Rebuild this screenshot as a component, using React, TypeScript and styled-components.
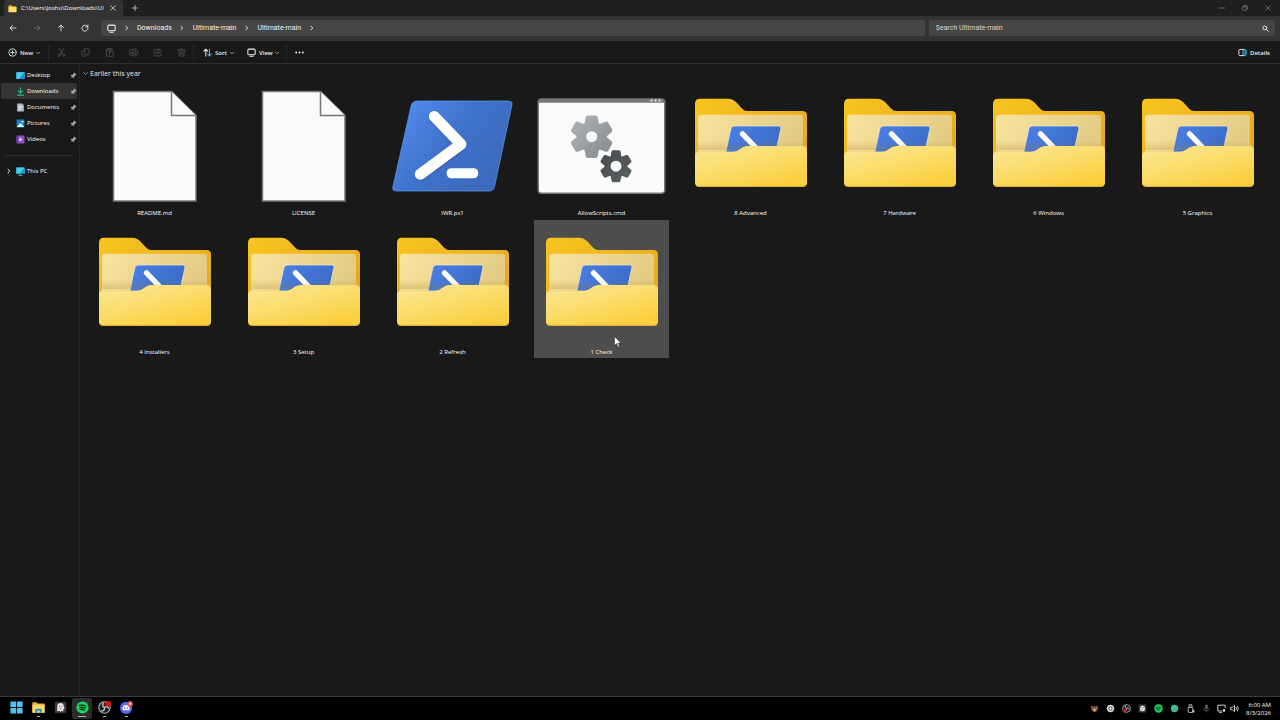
import React, { useId } from "react";
import styled, { createGlobalStyle } from "styled-components";

const GlobalStyle = createGlobalStyle`
  *, *::before, *::after { box-sizing: border-box; }
  body {
    margin: 0;
    background: #191919;
    color: #e4e4e4;
    font-family: "Open Sans", "Noto Sans", sans-serif;
    font-size: 7px;
    line-height: 10px;
  }
  button, input { font: inherit; color: inherit; }
  button { border: 0; padding: 0; background: none; cursor: default; }
  a { color: inherit; text-decoration: none; cursor: default; }
  ul, ol { margin: 0; padding: 0; list-style: none; }
  svg { display: block; flex: none; }
`;

/* ---------- Window frame ---------- */

const Desktop = styled.div`
  display: flex;
  flex-direction: column;
  min-height: 100vh;
`;

const TitleBar = styled.header`
  display: flex;
  align-items: stretch;
  height: 16px;
  padding-left: 4px;
  background: #1f1f1f;
`;

const Tab = styled.div`
  display: flex;
  align-items: center;
  gap: 4px;
  width: 119px;
  padding: 0 6px 0 4px;
  border-radius: 4px 4px 0 0;
  background: #333333;
`;

const TabTitle = styled.span`
  flex: 1;
  white-space: nowrap;
  font-size: 6px;
  color: #ffffff;
`;

const GlyphButton = styled.button<{ $width?: number; $dim?: boolean }>`
  display: flex;
  align-items: center;
  justify-content: center;
  width: ${(p) => p.$width ?? 24}px;
  color: ${(p) => (p.$dim ? "#7c7c7c" : "#dedede")};
`;

const WindowButtons = styled.div`
  display: flex;
  margin-left: auto;
  padding-right: 1px;
  color: #a0a0a0;
`;

const AddressRow = styled.div`
  display: flex;
  align-items: stretch;
  height: 25px;
  padding: 4px 5px 5px 1px;
  background: #333333;
  font-family: Roboto, "Open Sans", sans-serif;
`;

const NavButtons = styled.div`
  display: flex;
  width: 100px;
`;

const Breadcrumbs = styled.nav`
  display: flex;
  flex: 27 1 0;
  align-items: center;
  padding-left: 6px;
  border-radius: 2px;
  background: #454545;
  color: #f0f0f0;
`;

const CrumbList = styled.ol`
  display: flex;
  align-items: center;
`;

const Crumb = styled.li`
  display: flex;
  align-items: center;
`;

const CrumbChevron = styled.span`
  display: flex;
  justify-content: center;
  width: 21px;
`;

const SearchBox = styled.label`
  display: flex;
  flex: 11 1 0;
  align-items: center;
  margin-left: 4px;
  padding: 0 6px 0 7px;
  border-radius: 2px;
  background: #454545;
`;

const SearchInput = styled.input`
  flex: 1;
  min-width: 0;
  height: 12px;
  padding: 0;
  border: 0;
  outline: 0;
  background: none;
  &::placeholder { color: #d8d8d8; opacity: 1; }
`;

const Toolbar = styled.div`
  display: flex;
  align-items: stretch;
  height: 23px;
  padding: 1px 10px 0 8px;
  border-bottom: 1px solid #303030;
  background: #191919;
  font-size: 6px;
  font-weight: 600;
`;

const ToolButton = styled.button<{ $width?: number }>`
  display: flex;
  align-items: center;
  gap: 3px;
  width: ${(p) => (p.$width ? `${p.$width}px` : "auto")};
  color: #eeeeee;
  white-space: nowrap;
`;

const ToolLabel = styled.span<{ $width: number }>`
  width: ${(p) => p.$width}px;
`;

const ToolSeparator = styled.span<{ $after: number }>`
  width: 1px;
  margin: 2px ${(p) => p.$after}px 2px 0;
  background: #262626;
`;

const DetailsButton = styled(ToolButton)`
  margin-left: auto;
`;

/* ---------- Body ---------- */

const Body = styled.div`
  display: flex;
  flex: 1;
`;

const Sidebar = styled.nav`
  width: 80px;
  padding: 3px 2px 0 1px;
  border-right: 1px solid #262626;
`;

const SideLink = styled.a<{ $active?: boolean }>`
  display: flex;
  align-items: center;
  height: 16px;
  border-radius: 2px;
  background: ${(p) => (p.$active ? "#343434" : "transparent")};
  font-size: 6px;
  color: #ffffff;
`;

const SideChevron = styled.span`
  display: flex;
  justify-content: center;
  width: 15px;
`;

const SideLabel = styled.span`
  flex: 1;
  margin-left: 2px;
`;

const SideDivider = styled.hr`
  height: 1px;
  margin: 8px 4px 7px 4px;
  border: 0;
  background: #303030;
`;

const Content = styled.main`
  flex: 1;
  min-width: 0;
`;

const GroupHeading = styled.h2`
  display: flex;
  align-items: center;
  gap: 2px;
  height: 17px;
  margin: 0;
  padding: 2px 0 0 3px;
  font-size: 7px;
  font-weight: 400;
  color: #e8e8e8;
`;

const TileGrid = styled.ul`
  display: grid;
  grid-template-columns: repeat(auto-fill, 135px);
  gap: 1px 14px;
  padding: 0 7px;
`;

const TileCell = styled.li`
  position: relative;
`;

const Tile = styled.button<{ $hovered?: boolean }>`
  display: flex;
  flex-direction: column;
  align-items: center;
  width: 100%;
  height: 138px;
  padding-top: 1px;
  background: ${(p) => (p.$hovered ? "#4d4d4d" : "transparent")};
`;

const TileLabel = styled.span`
  font-size: 6px;
  line-height: 8px;
  color: #ffffff;
`;

const Cursor = styled.svg`
  position: absolute;
  left: 80px;
  top: 116px;
`;

/* ---------- Taskbar ---------- */

const Taskbar = styled.footer`
  display: flex;
  align-items: stretch;
  height: 24px;
  padding: 0 9px 0 5px;
  border-top: 1px solid #3a3a3a;
  background: #000000;
`;

const TaskButton = styled.button<{ $active?: boolean }>`
  display: flex;
  flex-direction: column;
  align-items: center;
  width: 20px;
  margin: 1px 1px;
  padding-top: 3px;
  border-radius: 2px;
  background: ${(p) => (p.$active ? "#2c2c2c" : "transparent")};
`;

const RunningMark = styled.span<{ $wide?: boolean }>`
  width: ${(p) => (p.$wide ? 8 : 3)}px;
  height: 1px;
  margin-top: 2px;
  background: #b0b0b0;
`;

const Tray = styled.div`
  display: flex;
  align-items: center;
  margin-left: auto;
`;

const Clock = styled.time`
  width: 31px;
  font-size: 6px;
  line-height: 8px;
  text-align: right;
  white-space: nowrap;
  color: #ffffff;
`;

/* ---------- Small glyphs ---------- */

type GlyphProps = {
  size?: number;
  color?: string;
  weight?: number;
  children: React.ReactNode;
};

const Glyph = ({ size = 8, color = "currentColor", weight = 1.6, children }: GlyphProps) => (
  <svg
    width={size}
    height={size}
    viewBox="0 0 16 16"
    fill="none"
    stroke={color}
    strokeWidth={weight}
    strokeLinecap="round"
    strokeLinejoin="round"
    aria-hidden="true"
  >
    {children}
  </svg>
);

const ChevronRight = ({ size = 6 }: { size?: number }) => (
  <Glyph size={size} weight={2.4}><path d="M5 3l5 5-5 5" /></Glyph>
);
const ChevronDown = ({ size = 4, weight = 2.4 }: { size?: number; weight?: number }) => (
  <Glyph size={size} weight={weight}><path d="M2 5l6 6 6-6" /></Glyph>
);
const CloseGlyph = ({ size = 6 }: { size?: number }) => (
  <Glyph size={size} weight={2}><path d="M2 2l12 12M14 2L2 14" /></Glyph>
);
const MonitorGlyph = () => (
  <Glyph size={9} weight={1.8}><rect x="1.5" y="2" width="13" height="10" rx="2" /><path d="M5 14.5h6" /></Glyph>
);
const PinGlyph = () => (
  <svg width="7" height="7" viewBox="0 0 16 16" fill="#a5a5a5" aria-hidden="true">
    <path d="M10 1l5 5-1.500 1.300-1 0L9.800 10l-.3 3L8 14.300 4.900 11.200 2 14.300l-.8.2.2-.8L4.500 10.800 1.700 8 3 6.500l3-.3L8.700 3.500V2.300z" />
  </svg>
);

const toolIcons: { name: string; art: React.ReactNode }[] = [
  { name: "Cut", art: <><path d="M4 1l6.500 10M12 1L5.500 11" /><circle cx="4" cy="13" r="2" /><circle cx="12" cy="13" r="2" /></> },
  { name: "Copy", art: <><rect x="6" y="1.500" width="8.500" height="10" rx="1.500" /><path d="M4 4.500H3A1.500 1.500 0 001.500 6v7A1.500 1.500 0 003 14.500h6A1.500 1.500 0 0010.500 13" /></> },
  { name: "Paste", art: <><path d="M5 2.500H2.500v12H6M11 2.500h2.500V5" /><path d="M5 1h6v3H5z" /><rect x="8" y="6.500" width="6.500" height="8.500" rx="1" /></> },
  { name: "Rename", art: <><path d="M9 3H3a2 2 0 00-2 2v6a2 2 0 002 2h6M13 3a2 2 0 012 2v6a2 2 0 01-2 2M11 1v14" /><path d="M3.500 10.500L6 5l2.500 5.500M4.500 9h3" /></> },
  { name: "Share", art: <><path d="M7 3H3.500A1.500 1.500 0 002 4.500v8A1.500 1.500 0 003.500 14h9a1.500 1.500 0 001.500-1.500V10" /><path d="M10.500 1.500L15 5.500l-4.500 4V7C8 7 6.500 8 5.500 10c0-3.500 2-6 5-6z" /></> },
  { name: "Delete", art: <><path d="M1.500 3.500h13M3 3.500l1 11h8l1-11M6 3.500a2 2 0 014 0M6.500 6.500v5M9.500 6.500v5" /></> },
];

const MutedGlyph = styled.span`
  display: flex;
  color: #4c5355;
`;

const SmallFolder = ({ size }: { size: number }) => (
  <svg width={size} height={size} viewBox="0 0 16 16" aria-hidden="true">
    <path d="M1 3a1 1 0 011-1h4l2 2h6a1 1 0 011 1v9H1z" fill="#e0a526" />
    <path d="M1 5.500h14v8a1 1 0 01-1 1H2a1 1 0 01-1-1z" fill="#ffdc68" />
  </svg>
);

/* ---------- Sidebar icons ---------- */

const sideIcons: Record<string, React.ReactNode> = {
  Desktop: <><rect x="0" y="2" width="16" height="12" rx="1.500" fill="#1695cc" /><path d="M1 2h14L5 14H1z" fill="#46cdf0" /></>,
  Downloads: <><path d="M8 1v9M3.500 6.500L8 11l4.500-4.500" stroke="#25b884" strokeWidth="2.200" fill="none" /><path d="M2 14.500h12" stroke="#25b884" strokeWidth="2.200" /></>,
  Documents: <><path d="M2 1h9l3 3v11H2z" fill="#a9b7ca" /><path d="M4.500 6H11M4.500 9H11M4.500 12H9" stroke="#edf3fa" strokeWidth="1.500" /></>,
  Pictures: <><rect x="1" y="1" width="14" height="14" rx="1.500" fill="#1680c4" /><path d="M1.500 14L8 6.500 14.500 14z" fill="#e5f5ff" /><circle cx="11.500" cy="4.500" r="1.500" fill="#ffffff" /></>,
  Videos: <><rect x="1" y="1" width="14" height="14" rx="1.500" fill="#8e4fd0" /><path d="M1 2h3v12H1z" fill="#6d35b0" /><path d="M6 5l5.500 3L6 11z" fill="#ffffff" /></>,
  "This PC": <><rect x="0" y="1" width="16" height="11" rx="1.500" fill="#1b9fca" /><path d="M1 1h14L6 12H1z" fill="#45d0e4" /><path d="M7 12h2v2h3v1.500H4V14h3z" fill="#7d9dad" /></>,
};

const SideIcon = ({ name }: { name: string }) => (
  <svg width="9" height="9" viewBox="0 0 16 16" aria-hidden="true">{sideIcons[name]}</svg>
);

/* ---------- Large file icons ---------- */

const Artwork = ({ children }: { children: React.ReactNode }) => (
  <svg width="129" height="127" viewBox="0 0 129 127" aria-hidden="true">{children}</svg>
);

const DocumentArt = () => (
  <Artwork>
    <path d="M23.500 9.500H81.500L106 33.500V119H23.500z" fill="#fafafa" stroke="#767676" strokeWidth="1.500" />
    <path d="M81.500 9.500V33.500H106" fill="#fafafa" stroke="#767676" strokeWidth="1.500" strokeLinejoin="round" />
  </Artwork>
);

const PowerShellArt = () => {
  const id = useId();
  return (
    <Artwork>
      <defs>
        <linearGradient id={id} x1="0" y1="0.2" x2="1" y2="0.8">
          <stop offset="0" stopColor="#5089ee" />
          <stop offset="0.45" stopColor="#4072cb" />
          <stop offset="1" stopColor="#3b68b9" />
        </linearGradient>
      </defs>
      <path
        d="M29.500 19H120.500Q124.800 19 123.900 23L106.500 104.500Q105.500 109 101 109H8.500Q4 109 4.900 105L23.200 23.500Q24.300 19 29.500 19z"
        fill={`url(#${id})`}
        stroke="#5b93e6"
        strokeWidth="0.8"
      />
      <path d="M46.500 36L73.500 63.500L32.500 93.500" fill="none" stroke="#2c529c" strokeOpacity="0.5" strokeWidth="11.500" strokeLinecap="round" strokeLinejoin="round" />
      <path d="M46.300 34.500L73 62.300L32.300 92.300" fill="none" stroke="#ffffff" strokeWidth="11" strokeLinecap="round" strokeLinejoin="round" />
      <rect x="58.700" y="86.300" width="31.500" height="10" rx="4.500" fill="#ffffff" />
    </Artwork>
  );
};

const GearShape = ({ cx, cy, scale, fill }: { cx: number; cy: number; scale: number; fill: string }) => {
  const id = useId();
  return (
    <g transform={`translate(${cx} ${cy}) scale(${scale})`}>
      <mask id={id} maskUnits="userSpaceOnUse" x="-24" y="-24" width="48" height="48">
        <rect x="-24" y="-24" width="48" height="48" fill="#ffffff" />
        <circle r={5.5 / scale} fill="#000000" />
      </mask>
      <g mask={`url(#${id})`}>
        <path
          fill={fill}
          d={[0, 60, 120, 180, 240, 300]
            .map((deg, i) => {
              const a = (deg * Math.PI) / 180;
              const at = (x: number, y: number) =>
                `${(x * Math.cos(a) - y * Math.sin(a)).toFixed(2)} ${(x * Math.sin(a) + y * Math.cos(a)).toFixed(2)}`;
              return `${i ? "L" : "M"}${at(-7, -14)}L${at(-6, -19.5)}Q${at(-5.6, -21.3)} ${at(-3.8, -21.3)}L${at(3.8, -21.3)}Q${at(5.6, -21.3)} ${at(6, -19.5)}L${at(7, -14)}Q${at(7.4, -12.4)} ${at(8.7, -13.1)}`;
            })
            .join("") + "Z"}
        />
      </g>
    </g>
  );
};

const CommandArt = () => {
  const id = useId();
  return (
    <Artwork>
      <defs>
        <linearGradient id={`${id}a`} x1="0" y1="0" x2="1" y2="1">
          <stop offset="0" stopColor="#afb4b8" />
          <stop offset="1" stopColor="#84898d" />
        </linearGradient>
        <linearGradient id={`${id}b`} x1="0" y1="0" x2="1" y2="1">
          <stop offset="0" stopColor="#454b4e" />
          <stop offset="1" stopColor="#5b6062" />
        </linearGradient>
      </defs>
      <rect x="0.500" y="16.300" width="128" height="95.700" rx="4" fill="#777777" />
      <path d="M2 20.700H127V108Q127 110.500 124.500 110.500H4.500Q2 110.500 2 108z" fill="#fafafa" />
      <g fill="#d6d6d6">
        <circle cx="114.500" cy="18.500" r="1.200" />
        <circle cx="118.500" cy="18.500" r="1.200" />
        <circle cx="122.500" cy="18.500" r="1.200" />
      </g>
      <GearShape cx={54.7} cy={54.7} scale={1} fill={`url(#${id}a)`} />
      <GearShape cx={79} cy={84.2} scale={0.75} fill={`url(#${id}b)`} />
    </Artwork>
  );
};

const FolderArt = () => {
  const id = useId();
  return (
    <Artwork>
      <defs>
        <linearGradient id={`${id}back`} x1="0" y1="0" x2="1" y2="1">
          <stop offset="0" stopColor="#f8c61f" />
          <stop offset="0.5" stopColor="#edb11f" />
          <stop offset="1" stopColor="#e2a41f" />
        </linearGradient>
        <linearGradient id={`${id}paper`} x1="0" y1="0" x2="1" y2="0.3">
          <stop offset="0" stopColor="#f8e49e" />
          <stop offset="1" stopColor="#e3cb83" />
        </linearGradient>
        <linearGradient id={`${id}shade`} x1="0" y1="0" x2="0" y2="1">
          <stop offset="0.7" stopColor="#a07c28" stopOpacity="0" />
          <stop offset="1" stopColor="#a07c28" stopOpacity="0.25" />
        </linearGradient>
        <linearGradient id={`${id}front`} x1="0" y1="0" x2="0.7" y2="1">
          <stop offset="0" stopColor="#fae798" />
          <stop offset="0.5" stopColor="#fbdd6d" />
          <stop offset="1" stopColor="#fbd03e" />
        </linearGradient>
        <linearGradient id={`${id}ps`} x1="0" y1="0" x2="1" y2="0.4">
          <stop offset="0" stopColor="#4c80e6" />
          <stop offset="1" stopColor="#3c6cc8" />
        </linearGradient>
      </defs>
      <path d="M9 22Q9 16.700 14 16.700H42Q47 16.700 50.500 20.500L56 26.500Q58.200 29 61.500 29H116.500Q121 29 121 33.500V96H9z" fill={`url(#${id}back)`} />
      <path d="M12 36Q12 32.700 15 32.700H114Q117 32.700 117 36V80H12z" fill={`url(#${id}paper)`} />
      <path d="M48.500 44H93Q95.500 44 94.900 46.500L89 74H39L44.800 47Q45.500 44 48.500 44z" fill={`url(#${id}ps)`} stroke="#f5edcc" strokeWidth="0.700" />
      <path d="M56.500 51.800L74 70" stroke="#ffffff" strokeWidth="5.300" strokeLinecap="round" />
      <path d="M12 36H117V68H12z" fill={`url(#${id}shade)`} />
      <path d="M9 74Q9 69.700 13.500 69.700H47Q50.500 69.700 53.500 67.500L56.500 65.500Q59 64 62 64H116.500Q121 64 121 68.500V100.500Q121 105 116.500 105H13.500Q9 105 9 100.500z" fill="#e4b23a" />
      <path d="M9 74Q9 69.700 13.500 69.700H47Q50.500 69.700 53.500 67.500L56.500 65.500Q59 64 62 64H116.500Q121 64 121 68.500V99.500Q121 103.800 116.500 103.800H13.500Q9 103.800 9 99.500z" fill={`url(#${id}front)`} />
    </Artwork>
  );
};

const artByKind = {
  document: DocumentArt,
  powershell: PowerShellArt,
  command: CommandArt,
  folder: FolderArt,
};

const files: { name: string; kind: keyof typeof artByKind; hovered?: boolean }[] = [
  { name: "README.md", kind: "document" },
  { name: "LICENSE", kind: "document" },
  { name: "IWR.ps1", kind: "powershell" },
  { name: "AllowScripts.cmd", kind: "command" },
  { name: "8 Advanced", kind: "folder" },
  { name: "7 Hardware", kind: "folder" },
  { name: "6 Windows", kind: "folder" },
  { name: "5 Graphics", kind: "folder" },
  { name: "4 Installers", kind: "folder" },
  { name: "3 Setup", kind: "folder" },
  { name: "2 Refresh", kind: "folder" },
  { name: "1 Check", kind: "folder", hovered: true },
];

/* ---------- Taskbar icons ---------- */

const SpotifyMark = () => (
  <>
    <circle cx="8" cy="8" r="7.500" fill="#1ed760" />
    <path d="M3.800 5.600c3-.9 6-.6 8.500.8M4.300 8.200c2.600-.7 5-.4 7.100.8M4.800 10.600c2-.5 4-.3 5.700.7" fill="none" stroke="#08260f" strokeWidth="1.300" strokeLinecap="round" />
  </>
);

const ObsMark = () => (
  <>
    <circle cx="8" cy="8" r="7" fill="#1c1c1c" stroke="#bdbdbd" strokeWidth="1.300" />
    <path d="M7 2.500c-2 2-1.500 4.500 1 5.500M13 9.500c-.8-2.700-3-3.400-5-1.500M4 12c2.700.6 4.500-1 4-4" fill="none" stroke="#c8c8c8" strokeWidth="1.700" />
  </>
);

const GhostMark = () => (
  <>
    <rect x="1" y="1" width="14" height="14" rx="1" fill="#3b3837" />
    <path d="M4 13V6q0-3 4-3.500Q12 3 12 6l1 3-1.500 1V13L9.500 12 8 13.500 6.500 12z" fill="#ece7e5" />
    <path d="M6 6.500h1.500M9 6.500h1.500M7 9.500h2" stroke="#6d5d58" strokeWidth="1.200" />
  </>
);

const taskApps: { name: string; active?: boolean; running?: boolean; art: React.ReactNode }[] = [
  {
    name: "Start",
    art: <path d="M0.500 0.500h7v7h-7zM8.500 0.500h7v7h-7zM0.500 8.500h7v7h-7zM8.500 8.500h7v7h-7z" fill="#49c3f5" />,
  },
  {
    name: "File Explorer",
    running: true,
    art: (
      <>
        <path d="M0.500 1.500h5l1.500 1.500h8.500V14h-15z" fill="#e9ac2c" />
        <path d="M0.500 4.500h15v10h-15z" fill="#ffdb61" />
        <path d="M4 14.500V10.500q0-1 1-1h6q1 0 1 1v4h-2.500V12h-3v2.500z" fill="#2e8fd6" />
      </>
    ),
  },
  { name: "Ghost", art: <GhostMark /> },
  { name: "Spotify", active: true, running: true, art: <SpotifyMark /> },
  {
    name: "OBS Studio",
    running: true,
    art: (
      <>
        <ObsMark />
        <circle cx="12.500" cy="3.500" r="3.500" fill="#e11313" />
      </>
    ),
  },
  {
    name: "Discord",
    running: true,
    art: (
      <>
        <circle cx="7.500" cy="8.500" r="7.500" fill="#5865f2" />
        <path d="M4.500 5.500q3-1.300 6 0 1.700 2.700 1.500 5.300-1.200.9-2.500 1.200l-.6-1H6.100l-.6 1Q4.200 11.700 3 10.800 2.800 8.200 4.500 5.500z" fill="#ffffff" />
        <circle cx="5.900" cy="8.700" r="1" fill="#5865f2" />
        <circle cx="9.100" cy="8.700" r="1" fill="#5865f2" />
        <circle cx="12.500" cy="3.500" r="3.500" fill="#e5484d" />
        <circle cx="12.500" cy="3.500" r="1.400" fill="#ffffff" />
      </>
    ),
  },
];

const trayIcons: { name: string; width: number; art: React.ReactNode }[] = [
  { name: "Security", width: 16, art: <><path d="M2 3l6 1.500L14 3v5q-1 5-6 6.500Q3 13 2 8z" fill="#a8643c" /><path d="M3 3l5 3 5-3v3L8 9 3 6z" fill="#5b4a42" /><circle cx="8" cy="10" r="2" fill="#e3c2a2" /></> },
  { name: "Settings", width: 16, art: <><path d="M8 1l2 1.300 2.800.2.700 2.700L15 8l-1.500 2.800-.7 2.700-2.800.2L8 15l-2-1.300-2.800-.2-.7-2.700L1 8l1.500-2.800.7-2.700L6 2.300z" fill="#e9e9e9" /><circle cx="8" cy="8" r="3" fill="none" stroke="#333333" strokeWidth="1.500" /></> },
  { name: "OBS Studio", width: 16, art: <><ObsMark /><circle cx="4" cy="12" r="3" fill="#d01c1c" /></> },
  { name: "Ghost", width: 16, art: <GhostMark /> },
  { name: "Spotify", width: 16, art: <SpotifyMark /> },
  { name: "Status", width: 16, art: <circle cx="8" cy="8" r="6.500" fill="#3fbf8e" /> },
  { name: "USB", width: 16, art: <><rect x="4" y="6" width="8" height="9" rx="1.500" fill="none" stroke="#dddddd" strokeWidth="1.500" /><path d="M5.500 6V1.500h5V6" fill="none" stroke="#dddddd" strokeWidth="1.500" /><path d="M11 11h4v4h-4z" fill="#c5c5c5" /></> },
  { name: "Microphone", width: 16, art: <><rect x="5.500" y="1" width="5" height="8.500" rx="2.500" fill="#5a5a5a" /><path d="M3 7.500q0 4.500 5 4.500t5-4.500M8 12v3" fill="none" stroke="#5a5a5a" strokeWidth="1.500" /></> },
  { name: "Network", width: 14, art: <><path d="M9 12.500H1.500V2h13v5M4 15h5" fill="none" stroke="#eeeeee" strokeWidth="1.500" /><path d="M10.500 9.500h4v3l-2 2-2-2z" fill="#eeeeee" /></> },
  { name: "Volume", width: 12, art: <><path d="M1 6h3l4-3.500v11L4 10H1z" fill="none" stroke="#eeeeee" strokeWidth="1.500" /><path d="M10.500 5.500q2 2.500 0 5M13 3.500q3.500 4.500 0 9" fill="none" stroke="#eeeeee" strokeWidth="1.500" /></> },
];

const crumbs = ["Downloads", "Ultimate-main", "Ultimate-main"];
const pinned = ["Desktop", "Downloads", "Documents", "Pictures", "Videos"];

export default function App() {
  return (
    <Desktop>
      <GlobalStyle />

      <TitleBar>
        <Tab>
          <SmallFolder size={9} />
          <TabTitle>C:\Users\Joshu\Downloads\Ul</TabTitle>
          <GlyphButton $width={8} aria-label="Close tab"><CloseGlyph /></GlyphButton>
        </Tab>
        <GlyphButton aria-label="New tab">
          <Glyph size={6} weight={2}><path d="M8 1v14M1 8h14" /></Glyph>
        </GlyphButton>
        <WindowButtons>
          <GlyphButton $width={23} $dim aria-label="Minimize">
            <Glyph size={6} weight={2}><path d="M1 8h14" /></Glyph>
          </GlyphButton>
          <GlyphButton $width={23} $dim aria-label="Restore">
            <Glyph size={6} weight={2}><rect x="1.500" y="4.500" width="10" height="10" rx="2" /><path d="M5 1.500h7a2.500 2.500 0 012.500 2.500v7" /></Glyph>
          </GlyphButton>
          <GlyphButton $width={23} $dim aria-label="Close"><CloseGlyph /></GlyphButton>
        </WindowButtons>
      </TitleBar>

      <AddressRow>
        <NavButtons>
          <GlyphButton aria-label="Back"><Glyph weight={1.9}><path d="M14 8H2.500M7 3L2 8l5 5" /></Glyph></GlyphButton>
          <GlyphButton $dim aria-label="Forward"><Glyph><path d="M2 8h11.500M9 3l5 5-5 5" /></Glyph></GlyphButton>
          <GlyphButton aria-label="Up"><Glyph weight={1.9}><path d="M8 14V2.500M3 7l5-5 5 5" /></Glyph></GlyphButton>
          <GlyphButton aria-label="Refresh"><Glyph weight={1.9}><path d="M13.500 6A6 6 0 1014 8.500M13.800 2v4h-4" /></Glyph></GlyphButton>
        </NavButtons>
        <Breadcrumbs aria-label="Address">
          <MonitorGlyph />
          <CrumbChevron><ChevronRight /></CrumbChevron>
          <CrumbList>
            {crumbs.map((crumb, i) => (
              <Crumb key={i}>
                <a href="#crumb">{crumb}</a>
                <CrumbChevron><ChevronRight /></CrumbChevron>
              </Crumb>
            ))}
          </CrumbList>
        </Breadcrumbs>
        <SearchBox>
          <SearchInput type="search" aria-label="Search" placeholder="Search Ultimate-main" />
          <Glyph size={7} weight={2.2}><circle cx="6.500" cy="6.500" r="4.500" /><path d="M10 10l4.500 4.500" /></Glyph>
        </SearchBox>
      </AddressRow>

      <Toolbar role="toolbar">
        <ToolButton $width={40}>
          <Glyph size={9} color="#cfe2ea"><circle cx="8" cy="8" r="6.500" /><path d="M8 5v6M5 8h6" /></Glyph>
          <ToolLabel $width={13}>New</ToolLabel>
          <ChevronDown />
        </ToolButton>
        <ToolSeparator $after={0} />
        {toolIcons.map((tool) => (
          <GlyphButton key={tool.name} aria-label={tool.name}>
            <MutedGlyph><Glyph size={9} weight={1.4}>{tool.art}</Glyph></MutedGlyph>
          </GlyphButton>
        ))}
        <ToolSeparator $after={9} />
        <ToolButton $width={44}>
          <Glyph size={9} weight={1.8}>
            <path d="M5 14V2M1.500 5.500L5 2l3.500 3.500" />
            <path d="M11.500 2v12M8.500 10.500l3 3.500 3.500-3.500" stroke="#48b6d8" />
          </Glyph>
          <ToolLabel $width={12}>Sort</ToolLabel>
          <ChevronDown />
        </ToolButton>
        <ToolButton $width={39}>
          <MonitorGlyph />
          <ToolLabel $width={13}>View</ToolLabel>
          <ChevronDown />
        </ToolButton>
        <ToolSeparator $after={0} />
        <GlyphButton aria-label="See more">
          <svg width="9" height="3" viewBox="0 0 9 3" fill="#e6e6e6" aria-hidden="true">
            <circle cx="1.200" cy="1.500" r="1" /><circle cx="4.500" cy="1.500" r="1" /><circle cx="7.800" cy="1.500" r="1" />
          </svg>
        </GlyphButton>
        <DetailsButton>
          <Glyph size={9}>
            <path d="M9.500 2.500h3a2 2 0 012 2v7a2 2 0 01-2 2h-3z" stroke="#48b6d8" fill="#1f6f8a" />
            <path d="M9.500 2.500h-6a2 2 0 00-2 2v7a2 2 0 002 2h6" />
          </Glyph>
          Details
        </DetailsButton>
      </Toolbar>

      <Body>
        <Sidebar aria-label="Places">
          {pinned.map((place) => (
            <SideLink key={place} href="#place" $active={place === "Downloads"}>
              <SideChevron />
              <SideIcon name={place} />
              <SideLabel>{place}</SideLabel>
              <PinGlyph />
            </SideLink>
          ))}
          <SideDivider />
          <SideLink href="#this-pc">
            <SideChevron><ChevronRight /></SideChevron>
            <SideIcon name="This PC" />
            <SideLabel>This PC</SideLabel>
          </SideLink>
        </Sidebar>

        <Content>
          <GroupHeading><ChevronDown size={5} weight={1.8} />Earlier this year</GroupHeading>
          <TileGrid>
            {files.map(({ name, kind, hovered }) => {
              const Art = artByKind[kind];
              return (
                <TileCell key={name}>
                  <Tile $hovered={hovered}>
                    <Art />
                    <TileLabel>{name}</TileLabel>
                  </Tile>
                  {hovered && (
                    <Cursor width="8" height="12" viewBox="0 0 8 12" aria-hidden="true">
                      <path d="M0.500 0.500V9.500L2.600 7.600L4 11L5.500 10.400L4.100 7.100H7z" fill="#ffffff" stroke="#222222" strokeWidth="0.500" />
                    </Cursor>
                  )}
                </TileCell>
              );
            })}
          </TileGrid>
        </Content>
      </Body>

      <Taskbar>
        {taskApps.map((app) => (
          <TaskButton key={app.name} $active={app.active} aria-label={app.name}>
            <svg width="13" height="13" viewBox="0 0 16 16" aria-hidden="true">{app.art}</svg>
            {app.running && <RunningMark $wide={app.active} />}
          </TaskButton>
        ))}
        <Tray>
          {trayIcons.map((icon) => (
            <GlyphButton key={icon.name} $width={icon.width} aria-label={icon.name}>
              <svg width="9" height="9" viewBox="0 0 16 16" aria-hidden="true">{icon.art}</svg>
            </GlyphButton>
          ))}
          <Clock>6:00 AM<br />8/3/2026</Clock>
        </Tray>
      </Taskbar>
    </Desktop>
  );
}
